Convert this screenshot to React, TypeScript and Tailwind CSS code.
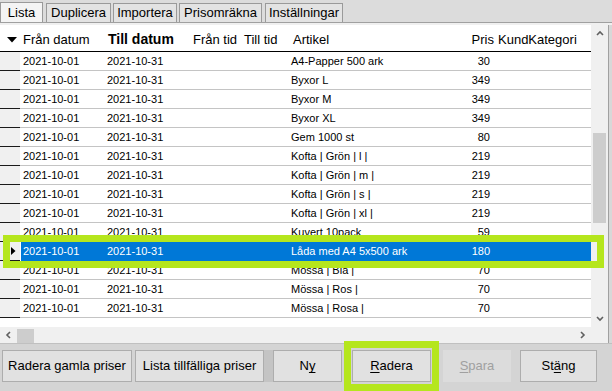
import React from "react";

const rows = [
  ["A4-Papper 500 ark", "30"],
  ["Byxor L", "349"],
  ["Byxor M", "349"],
  ["Byxor XL", "349"],
  ["Gem 1000 st", "80"],
  ["Kofta | Grön | l |", "219"],
  ["Kofta | Grön | m |", "219"],
  ["Kofta | Grön | s |", "219"],
  ["Kofta | Grön | xl |", "219"],
  ["Kuvert 10pack", "59"],
  ["Låda med A4 5x500 ark", "180"],
  ["Mössa | Blå |", "70"],
  ["Mössa | Ros |", "70"],
  ["Mössa | Rosa |", "70"],
];

const SEL = 10;

function Chevron({ dir }: { dir: "up" | "down" | "left" | "right" }) {
  const pts: Record<string, string> = {
    up: "1,5 4,2 7,5",
    down: "1,2 4,5 7,2",
    left: "5,1 2,4 5,7",
    right: "2,1 5,4 2,7",
  };
  return (
    <svg width="8" height="8" viewBox="0 0 8 8">
      <polyline points={pts[dir]} fill="none" stroke="#606060" strokeWidth="1.6" />
    </svg>
  );
}

function Tab({ label, active, w }: { label: string; active?: boolean; w: string }) {
  return (
    <div
      className={
        "flex items-center justify-center border border-b-0 border-[#9a9a9a] text-[13px] text-black " +
        w +
        (active ? " h-[20px] bg-[#f4f4f4]" : " h-[19px] bg-[#e3e3e3]")
      }
    >
      {label}
    </div>
  );
}

export default function App() {
  return (
    <div className="relative w-[612px] h-[391px] overflow-hidden bg-[#d4d4d4] font-['Liberation_Sans',Arial,sans-serif] text-black">
      {/* tabs */}
      <div className="flex h-[22px] items-end bg-[#dcdcdc]">
        <Tab label="Lista" active w="w-[43px]" />
        <div className="w-[3px]" />
        <Tab label="Duplicera" w="w-[65px]" />
        <div className="w-[2px]" />
        <Tab label="Importera" w="w-[64px]" />
        <div className="w-[2px]" />
        <Tab label="Prisomräkna" w="w-[83px]" />
        <div className="w-[3px]" />
        <Tab label="Inställningar" w="w-[78px]" />
      </div>

      {/* panel */}
      <div className="border-t border-[#a0a0a0] bg-[#f0f0f0] pt-[2px]">
        <div className="flex">
          {/* grid */}
          <div className="w-[591px] bg-white">
            {/* header */}
            <div className="flex h-[27px] items-center border-b border-black pt-[3px] text-[13px]">
              <div className="flex w-[23px] pl-[7px]">
                <svg width="10" height="6" viewBox="0 0 10 6">
                  <polygon points="0,0 10,0 5,5.5" fill="#000" />
                </svg>
              </div>
              <div className="w-[85px]">Från datum</div>
              <div className="w-[85px] text-[14px] font-bold">Till datum</div>
              <div className="w-[51px]">Från tid</div>
              <div className="w-[49px]">Till tid</div>
              <div className="w-[150px]">Artikel</div>
              <div className="w-[51px] text-right">Pris</div>
              <div className="pl-[4px]">KundKategori</div>
            </div>
            {/* rows */}
            {rows.map(([art, pris], i) => {
              const sel = i === SEL;
              return (
                <div key={i} className="flex h-[19px] text-[11px]">
                  <div className="flex w-[20px] items-center border-b border-[#1a1a1a] bg-[#f0f0f0] pl-[11px]">
                    {sel && (
                      <svg width="5" height="8" viewBox="0 0 5 8">
                        <polygon points="0,0 4.5,4 0,8" fill="#000" />
                      </svg>
                    )}
                  </div>
                  <div
                    className={
                      "flex flex-1 items-center border-b " +
                      (sel ? "ml-[1px] border-[#0078d7] bg-[#0078d7] text-white" : "border-[#c4c4c4]")
                    }
                  >
                    <div className={sel ? "w-[83px] pl-[2px]" : "w-[84px] pl-[3px]"}>2021-10-01</div>
                    <div className="w-[100px] pl-[3px]">2021-10-31</div>
                    <div className="w-[84px]" />
                    <div className="w-[150px] pl-[3px]">{art}</div>
                    <div className="w-[52px] text-right">{pris}</div>
                  </div>
                </div>
              );
            })}
            <div className="h-[9px]" />
            {/* horizontal scrollbar */}
            <div className="flex h-[16px] items-center bg-[#f0f0f0]">
              <div className="flex w-[17px] items-center justify-center">
                <Chevron dir="left" />
              </div>
              <div className="mt-[1px] h-[14px] w-[17px] bg-[#cdcdcd]" />
              <div className="flex-1" />
              <div className="flex w-[17px] items-center justify-center">
                <Chevron dir="right" />
              </div>
            </div>
          </div>
          {/* vertical scrollbar */}
          <div className="flex w-[17px] flex-col bg-[#f0f0f0]">
            <div className="flex h-[17px] items-center justify-center">
              <Chevron dir="up" />
            </div>
            <div className="h-[91px]" />
            <div className="mx-[2px] h-[90px] bg-[#cdcdcd]" />
            <div className="flex-1" />
            <div className="flex h-[17px] items-center justify-center">
              <Chevron dir="down" />
            </div>
            <div className="h-[16px] bg-[#f0f0f0]" />
          </div>
          <div className="w-[1px] bg-[#a0a0a0]" />
          <div className="flex-1 bg-[#d8d8d8]" />
        </div>
      </div>

      {/* bottom strip */}
      <div className="flex h-[48px] items-start border-t border-[#c0c0c0] pt-[6px] text-[13px]">
        <div className="ml-[2px] flex h-[32px] w-[130px] items-center justify-center border border-[#adadad] bg-[#e1e1e1]">
          Radera gamla priser
        </div>
        <div className="ml-[3px] flex h-[32px] w-[129px] items-center justify-center border border-[#adadad] bg-[#e1e1e1]">
          Lista tillfälliga priser
        </div>
        <div className="h-[32px] w-[9px] bg-[#c4c4c4]" />
        <div className="flex h-[32px] w-[69px] items-center justify-center border border-[#adadad] bg-[#e1e1e1]">
          <span>
            N<span className="underline underline-offset-2">y</span>
          </span>
        </div>
        <div className="ml-[10px] flex h-[32px] w-[79px] items-center justify-center border border-[#adadad] bg-[#e1e1e1]">
          <span>
            <span className="underline underline-offset-2">R</span>adera
          </span>
        </div>
        <div className="ml-[12px] flex h-[32px] w-[68px] items-center justify-center bg-[#dcdcdc] text-[#a0a0a0]">
          <span>
            <span className="underline underline-offset-2">S</span>para
          </span>
        </div>
        <div className="ml-[9px] flex h-[32px] w-[77px] items-center justify-center border border-[#adadad] bg-[#e1e1e1]">
          <span>
            St<span className="underline underline-offset-2">ä</span>ng
          </span>
        </div>
      </div>

      {/* highlight overlays */}
      <div className="pointer-events-none absolute left-[3px] top-[235px] h-[33px] w-[601px] border-[7px] border-[#b5e61d]" />
      <div className="pointer-events-none absolute left-[344px] top-[341px] h-[50px] w-[95px] border-[7px] border-[#b5e61d]" />
    </div>
  );
}
